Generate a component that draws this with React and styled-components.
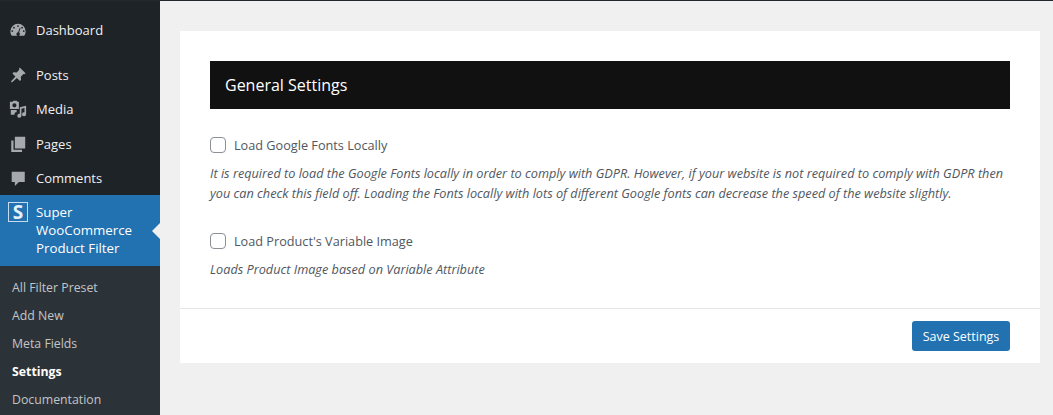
import React from "react";
import styled, { createGlobalStyle } from "styled-components";

const GlobalStyle = createGlobalStyle`
  html, body { margin: 0; padding: 0; height: 100%; background: #f0f0f1; }
  body { font-family: "Open Sans", "Noto Sans", sans-serif; overflow: hidden; }
`;

const menuItems = [
  { label: "Posts", icon: "posts" },
  { label: "Media", icon: "media" },
  { label: "Pages", icon: "pages" },
  { label: "Comments", icon: "comments" },
];

const subItems = ["All Filter Preset", "Add New", "Meta Fields", "Settings", "Documentation"];

const Icon = ({ name }) => {
  const paths = {
    dashboard:
      "M10 3a8.5 8.5 0 0 0-8.5 8.5c0 1.9.6 3.6 1.6 5h13.8a8.5 8.5 0 0 0 1.6-5A8.5 8.5 0 0 0 10 3zm0 1.6a1 1 0 1 1 0 2 1 1 0 0 1 0-2zM5.5 6.4a1 1 0 1 1 0 2 1 1 0 0 1 0-2zm9 0a1 1 0 1 1 0 2 1 1 0 0 1 0-2zM3.6 10.2a1 1 0 1 1 0 2 1 1 0 0 1 0-2zm12.8 0a1 1 0 1 1 0 2 1 1 0 0 1 0-2zM12 7.5l.9.4-1.7 5a1.9 1.9 0 1 1-1.1-.3L12 7.5z",
    posts:
      "M11.9 1.6l6.5 6.5-1.2 1.2-1.1-.4-3 3 .3 3.4-1.3 1.3-3.3-3.3-5.6 4.9-1-1 4.9-5.6-3.3-3.3 1.3-1.3 3.4.3 3-3-.4-1.1z",
    media:
      "M1 2h3l1-1.2h3.5L9.5 2H11v8H1V2zm5 1.6a2.3 2.3 0 1 0 0 4.6 2.3 2.3 0 0 0 0-4.6zM19 6.5v9.3a2.3 2.3 0 1 1-1.8-2.2V9l-3.4.8V17.5a2.3 2.3 0 1 1-1.8-2.2V8L19 6.5zM2 11h6.5v2.5H7.2a3.6 3.6 0 0 0-1.2 3H2V11z",
    pages:
      "M6.5 2H18v13H6.5V2zM2.5 6H5v10.5h9.5V19h-12V6z",
    comments:
      "M3 3h14.5v11.5H11l-4.5 4.5v-4.5H3V3z",
  };
  return (
    <MenuIcon viewBox="0 0 20 20" aria-hidden="true">
      <path d={paths[name]} fillRule="evenodd" />
    </MenuIcon>
  );
};

export default function App() {
  return (
    <>
      <GlobalStyle />
      <Page>
        <Sidebar>
          <DashboardRow>
            <Icon name="dashboard" />
            <span>Dashboard</span>
          </DashboardRow>
          {menuItems.map((item) => (
            <MenuRow key={item.label}>
              <Icon name={item.icon} />
              <span>{item.label}</span>
            </MenuRow>
          ))}
          <ActiveRow>
            <PluginLogo>S</PluginLogo>
            <ActiveLabel>
              Super
              <br />
              WooCommerce
              <br />
              Product Filter
            </ActiveLabel>
            <ActiveArrow />
          </ActiveRow>
          <SubMenu>
            {subItems.map((label) => (
              <SubItem key={label} $current={label === "Settings"}>
                {label}
              </SubItem>
            ))}
          </SubMenu>
        </Sidebar>
        <Main>
          <Card>
            <CardBody>
              <Banner>General Settings</Banner>
              <Option>
                <CheckRow>
                  <Box />
                  <CheckLabel>Load Google Fonts Locally</CheckLabel>
                </CheckRow>
                <Hint>
                  It is required to load the Google Fonts locally in order to comply with GDPR. However, if your
                  website is not required to comply with GDPR then you can check this field off. Loading the Fonts
                  locally with lots of different Google fonts can decrease the speed of the website slightly.
                </Hint>
              </Option>
              <Option>
                <CheckRow>
                  <Box />
                  <CheckLabel>Load Product's Variable Image</CheckLabel>
                </CheckRow>
                <Hint>Loads Product Image based on Variable Attribute</Hint>
              </Option>
            </CardBody>
            <CardFooter>
              <SaveButton type="button">Save Settings</SaveButton>
            </CardFooter>
          </Card>
        </Main>
      </Page>
    </>
  );
}

const Page = styled.div`
  display: flex;
  height: 415px;
  overflow: hidden;
  border-top: 1px solid #23282d;
  box-sizing: border-box;
`;

const Sidebar = styled.nav`
  width: 160px;
  flex: none;
  background: #1d2327;
  color: #f0f0f1;
  font-size: 13px;
  padding-top: 12px;
  box-sizing: border-box;
`;

const MenuRow = styled.div`
  display: flex;
  align-items: center;
  height: 34.2px;
  padding-left: 9px;
  gap: 9px;
`;

const DashboardRow = styled(MenuRow)`
  margin-bottom: 11px;
`;

const MenuIcon = styled.svg`
  width: 18px;
  height: 18px;
  flex: none;
  fill: #a7aaad;
`;

const ActiveRow = styled.div`
  position: relative;
  display: flex;
  align-items: flex-start;
  height: 71px;
  background: #2271b1;
  color: #fff;
  padding: 7px 0 0 8px;
  box-sizing: border-box;
  gap: 8px;
`;

const PluginLogo = styled.div`
  width: 20px;
  height: 20px;
  border: 1px solid #c6dcee;
  color: #e6f0f8;
  font-size: 19px;
  font-weight: 700;
  line-height: 18px;
  text-align: center;
  box-sizing: border-box;
  flex: none;
`;

const ActiveLabel = styled.div`
  font-size: 13.3px;
  line-height: 18px;
  padding-top: 1px;
`;

const ActiveArrow = styled.span`
  position: absolute;
  right: 0;
  top: 28px;
  border: 8px solid transparent;
  border-right-color: #f0f0f1;
`;

const SubMenu = styled.div`
  background: #2c3338;
  padding-top: 8px;
  height: 150px;
`;

const SubItem = styled.div`
  height: 28px;
  line-height: 28px;
  padding-left: 12px;
  font-size: 12.3px;
  color: ${(p) => (p.$current ? "#fff" : "#c3c4c7")};
  font-weight: ${(p) => (p.$current ? 700 : 400)};
`;

const Main = styled.main`
  flex: 1;
  padding: 30px 13px 0 20px;
`;

const Card = styled.section`
  background: #fff;
  height: 332px;
  display: flex;
  flex-direction: column;
`;

const CardBody = styled.div`
  flex: 1;
  padding: 30px 30px 0;
`;

const Banner = styled.h2`
  margin: 0 0 26px;
  height: 48px;
  line-height: 48px;
  background: #111;
  color: #fff;
  font-size: 16px;
  font-weight: 400;
  padding-left: 15px;
`;

const Option = styled.div`
  margin-bottom: 28px;
`;

const CheckRow = styled.div`
  display: flex;
  align-items: center;
  gap: 8px;
  height: 20px;
  margin-bottom: 8px;
`;

const Box = styled.span`
  width: 14px;
  height: 14px;
  border: 1px solid #8c8f94;
  border-radius: 4px;
  background: #fff;
  flex: none;
`;

const CheckLabel = styled.span`
  font-size: 12.7px;
  font-weight: 500;
  color: #50575e;
`;

const Hint = styled.p`
  margin: 0;
  font-size: 12.7px;
  font-style: italic;
  line-height: 20px;
  color: #50575e;
`;

const CardFooter = styled.div`
  height: 55px;
  box-sizing: border-box;
  border-top: 1px solid #e6e6e6;
  display: flex;
  justify-content: flex-end;
  align-items: flex-start;
  padding: 12px 30px 0 0;
`;

const SaveButton = styled.button`
  height: 30px;
  width: 98px;
  padding: 0;
  border: none;
  border-radius: 3px;
  background: #2271b1;
  color: #fff;
  font-family: inherit;
  font-size: 12.5px;
`;
